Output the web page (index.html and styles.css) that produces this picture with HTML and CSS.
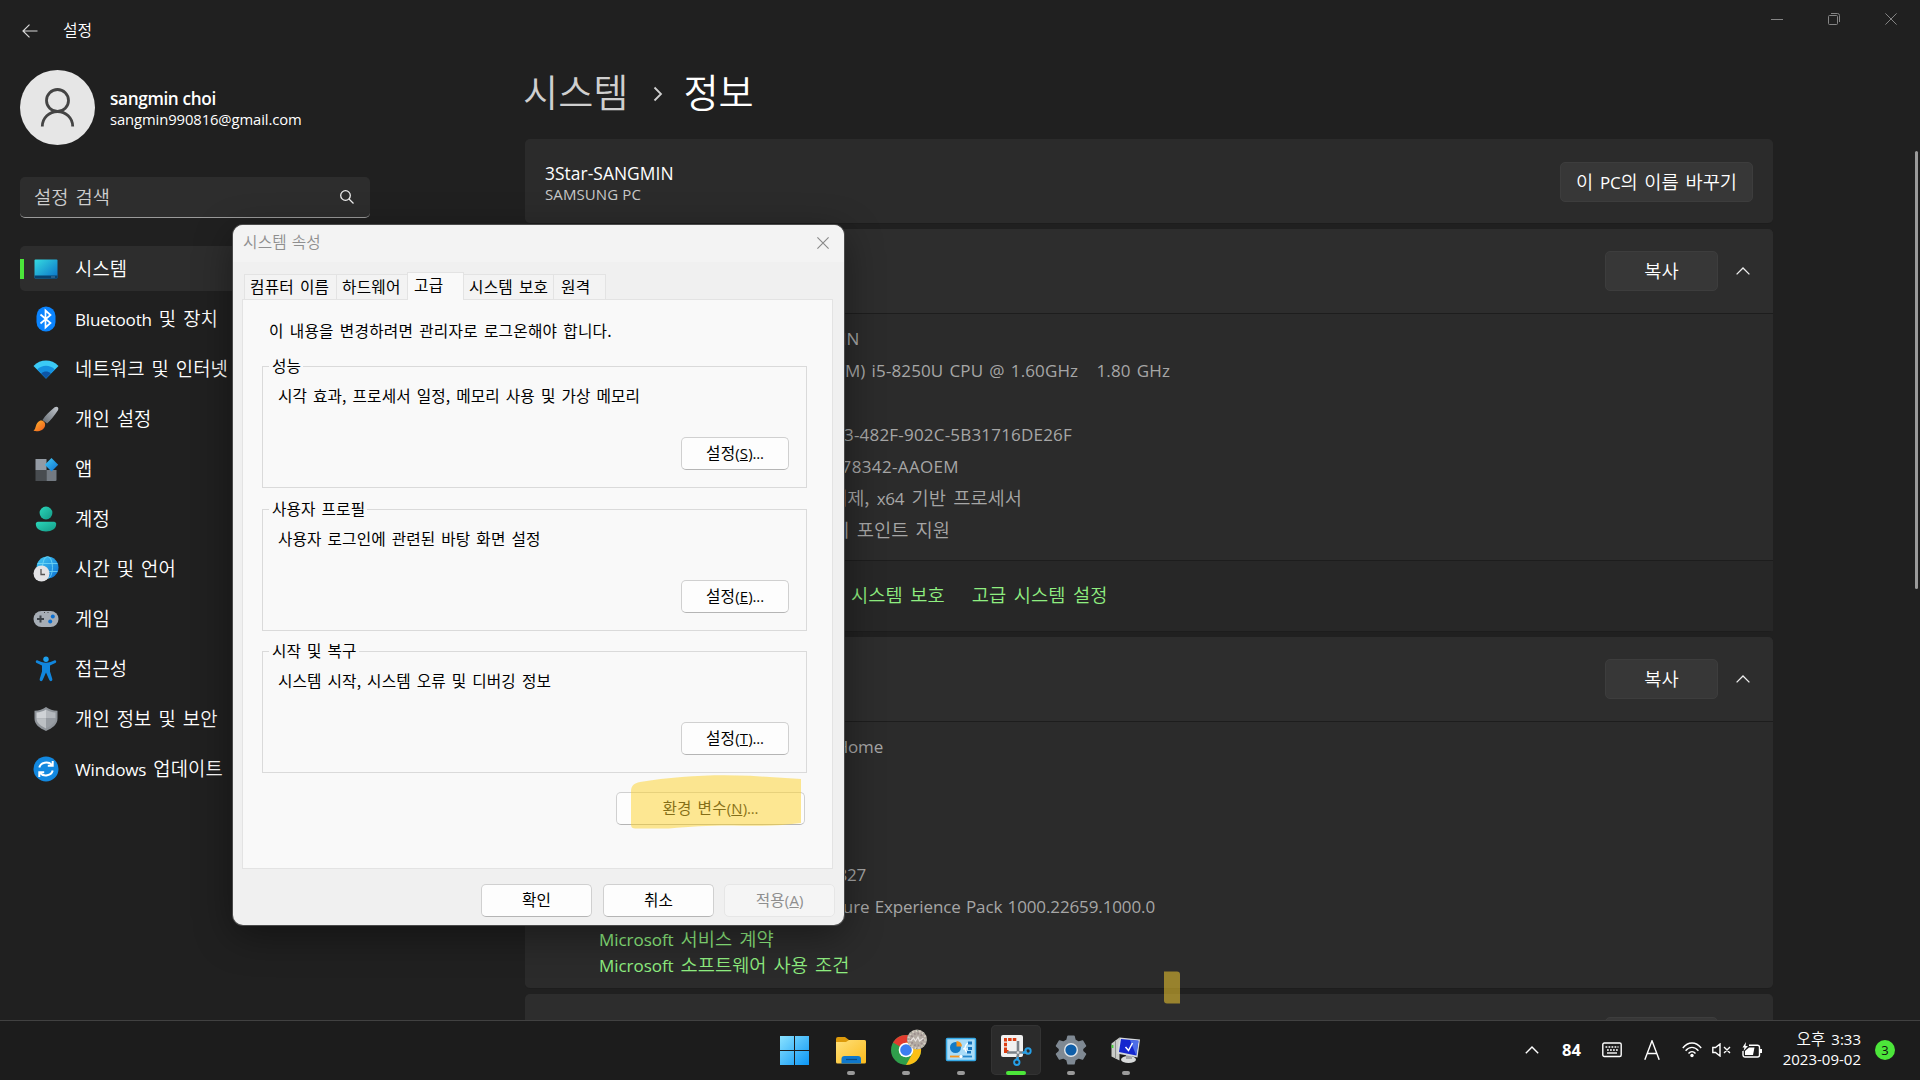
FILE: index.html
```html
<!DOCTYPE html>
<html lang="ko">
<head>
<meta charset="utf-8">
<title>설정</title>
<link rel="stylesheet" href="styles.css">
</head>
<body>
<div class="desktop">
  <div class="settings">
    <aside class="sidebar">
      <div class="app-bar">
        <svg class="back" viewBox="0 0 16 14"><path d="M15.500 7H1M7.500 .6L1 7l6.500 6.400"/></svg>
        <span class="app-title">설정</span>
      </div>
      <div class="account">
        <svg class="avatar" viewBox="0 0 75 75"><circle cx="37.500" cy="37.500" r="37.500" fill="#e6e6e6"/><g fill="none" stroke="#444" stroke-width="2.800"><circle cx="37.500" cy="30.500" r="11"/><path d="M22.300 56.500c0-8.500 7-15 15.200-15s15.200 6.500 15.200 15"/></g></svg>
        <div class="account-text">
          <div class="account-name">sangmin choi</div>
          <div class="account-mail">sangmin990816@gmail.com</div>
        </div>
      </div>
      <div class="search">
        <span>설정 검색</span>
        <svg viewBox="0 0 14 14"><circle cx="5.500" cy="5.500" r="4.800"/><path d="M9 9l4.500 4.500"/></svg>
      </div>
      <nav class="nav">
        <div class="nav-item selected">
          <svg viewBox="0 0 26 26"><defs><linearGradient id="g-sys" x1="0" y1="0" x2="1" y2="1"><stop offset="0" stop-color="#35dbe0"/><stop offset="1" stop-color="#0a70c8"/></linearGradient></defs><rect x="1.500" y="3.500" width="23" height="19" rx="1" fill="url(#g-sys)"/><path d="M1.500 19.500h23v2a1 1 0 0 1-1 1h-21a1 1 0 0 1-1-1z" fill="#07426f"/><path d="M18.500 21h1M20.500 21h1" stroke="#8bd" stroke-width="1"/></svg>
          <span>시스템</span>
        </div>
        <div class="nav-item">
          <svg viewBox="0 0 26 26"><rect x="3.500" y=".5" width="19" height="25" rx="9.500" fill="#0a84ff"/><path d="M7.500 8.500l10 8.500-5 4.500v-17l5 4.500-10 8.500" fill="none" stroke="#fff" stroke-width="1.700"/></svg>
          <span><b class="en">Bluetooth</b> 및 장치</span>
        </div>
        <div class="nav-item">
          <svg viewBox="0 0 26 26"><path d="M.5 10C7.500 2.700 18.500 2.700 25.500 10L13 22.500z" fill="#3bcaf6"/><path d="M4.200 13.500c5-5 12.600-5 17.600 0L13 22.500z" fill="#1590e0"/><path d="M8.200 17.500c2.800-2.600 6.800-2.600 9.600 0L13 22.500z" fill="#0d55a5"/></svg>
          <span>네트워크 및 인터넷</span>
        </div>
        <div class="nav-item">
          <svg viewBox="0 0 26 26"><defs><linearGradient id="g-br" x1="1" y1="0" x2="0" y2="1"><stop offset="0" stop-color="#c3c8ce"/><stop offset="1" stop-color="#646b72"/></linearGradient><linearGradient id="g-tip" x1="0" y1="0" x2="1" y2="1"><stop offset="0" stop-color="#ffb62e"/><stop offset="1" stop-color="#ee5a1c"/></linearGradient></defs><path d="M24.800 1.200c.8.800.6 2.200 0 3.200C21 10 17.500 14.500 14 17.500L9.500 14C12.500 9.500 17 5 21.600 1.300c1-.8 2.400-.8 3.200-.1z" fill="url(#g-br)"/><path d="M6.500 15c3-1.500 6.500 1.500 5.500 5-1.200 4.600-7 6-11.500 4.800C3.500 22.500 2 17.500 6.500 15z" fill="url(#g-tip)"/></svg>
          <span>개인 설정</span>
        </div>
        <div class="nav-item">
          <svg viewBox="0 0 26 26"><defs><linearGradient id="g-app" x1="0" y1="0" x2="1" y2="1"><stop offset="0" stop-color="#43cbf5"/><stop offset="1" stop-color="#0c70d2"/></linearGradient></defs><path d="M2.500 3h11v11h-11z" fill="#949ba4"/><path d="M2.500 14h11v11h-11z" fill="#484c50"/><path d="M13.500 14h10v10a1 1 0 0 1-1 1h-9z" fill="#737a82"/><path d="M18.500 2l6.700 6.700-6.700 6.700-6.700-6.700z" fill="url(#g-app)"/></svg>
          <span>앱</span>
        </div>
        <div class="nav-item">
          <svg viewBox="0 0 26 26"><defs><linearGradient id="g-acc" x1="0" y1="0" x2="1" y2="1"><stop offset="0" stop-color="#2bd6ba"/><stop offset="1" stop-color="#139a86"/></linearGradient></defs><circle cx="13" cy="7" r="6.400" fill="url(#g-acc)"/><path d="M5 15.800h16c1.300 0 2.200 1 2.200 2.200 0 4.700-4.500 7.500-10.200 7.500S2.800 22.700 2.800 18c0-1.200.9-2.200 2.200-2.200z" fill="url(#g-acc)"/></svg>
          <span>계정</span>
        </div>
        <div class="nav-item">
          <svg viewBox="0 0 26 26"><circle cx="14.500" cy="11.500" r="11" fill="url(#g-app)"/><g fill="none" stroke="#7fe0f8" stroke-width=".9" opacity=".8"><ellipse cx="14.500" cy="11.500" rx="5" ry="11"/><path d="M4.500 7.500h20M4.500 15.500h20"/></g><circle cx="8.500" cy="17.500" r="8" fill="#e3e3e5"/><path d="M8 13v5.500h4" fill="none" stroke="#555" stroke-width="1.300"/></svg>
          <span>시간 및 언어</span>
        </div>
        <div class="nav-item">
          <svg viewBox="0 0 26 26"><rect x=".5" y="5" width="25" height="16" rx="8" fill="#a6adb5"/><path d="M7.500 9.500v7M4 13h7" stroke="#3c4248" stroke-width="2"/><circle cx="19.800" cy="10.600" r="2" fill="#0b6fd0"/><circle cx="17.200" cy="15.400" r="2" fill="#0b6fd0"/><path d="M11 6.500h1M14.500 6.500h1" stroke="#444"/></svg>
          <span>게임</span>
        </div>
        <div class="nav-item">
          <svg viewBox="0 0 26 26"><circle cx="13" cy="3.200" r="2.700" fill="#1ea0ee"/><path d="M4.800 4.500c2.500 1.200 5 2.200 8.200 2.200s5.700-1 8.200-2.200c1.900-.7 2.800 1.700 1.100 2.600L17 9.500v6l2.300 7.600c.5 2-2.200 3-3 1L13 16.500l-3.300 7.600c-.8 2-3.500 1-3-1L9 15.500v-6L3.700 7.100C2 6.200 2.900 3.800 4.800 4.500z" fill="#1186dd"/></svg>
          <span>접근성</span>
        </div>
        <div class="nav-item">
          <svg viewBox="0 0 26 26"><path d="M13 1c3 2.500 7 3.500 11.500 3.800v7.700c0 6-5 9.500-11.500 12.500C6.500 22 1.500 18.500 1.500 12.500V4.800C6 4.500 10 3.500 13 1z" fill="#8f949a"/><path d="M13 3.500v8.800H3.500V6.500C7 6.200 10.500 5.300 13 3.500z" fill="#cfd2d6"/><path d="M13 3.500v8.800h9.500V6.500C19 6.200 15.500 5.300 13 3.500z" fill="#b4b8bd"/><path d="M3.500 12.300H13v10.200c-5-2.300-9.500-5.200-9.500-10.200z" fill="#bcc0c4"/><path d="M22.500 12.300H13v10.200c5-2.300 9.500-5.200 9.500-10.200z" fill="#989da3"/></svg>
          <span>개인 정보 및 보안</span>
        </div>
        <div class="nav-item">
          <svg viewBox="0 0 26 26"><circle cx="13" cy="13" r="12.500" fill="#1288e0"/><g fill="none" stroke="#fff" stroke-width="2"><path d="M6.300 11.500c1.300-5.300 9-6.500 12.700-2.500M19.700 14.500c-1.300 5.300-9 6.500-12.700 2.500"/><path d="M19.700 5v4.800h-4.900M6.300 21v-4.800h4.900"/></g></svg>
          <span><b class="en">Windows</b> 업데이트</span>
        </div>
      </nav>
    </aside>
    <main class="page">
      <h1 class="crumbs"><span class="crumb-parent">시스템</span><svg viewBox="0 0 10 16"><path d="M1.500 1.500L8 8l-6.500 6.500"/></svg><span>정보</span></h1>
      <section class="card device">
        <div>
          <div class="device-name">3Star-SANGMIN</div>
          <div class="device-model">SAMSUNG PC</div>
        </div>
        <div class="btn rename"><span>이 <b class="en">PC</b>의 이름 바꾸기</span></div>
      </section>
      <section class="card">
        <div class="card-head"><div class="btn copy">복사</div><svg class="chev" viewBox="0 0 14 8"><path d="M.6 7.400L7 1l6.400 6.400"/></svg></div>
        <div class="card-rows device-rows">
          <div class="row end-name"><b class="en">3Star-SANGMIN</b></div>
          <div class="row end-cpu"><b class="en">(TM) i5-8250U CPU @ 1.60GHz   1.80 GHz</b></div>
          <div class="row"></div>
          <div class="row end-id"><b class="en">33-482F-902C-5B31716DE26F</b></div>
          <div class="row end-product"><b class="en">78342-AAOEM</b></div>
          <div class="row ko end-type"><span>운영 체제, <b class="en">x64</b> 기반 프로세서</span></div>
          <div class="row ko end-pen"><span>터치 포인트 지원</span></div>
        </div>
        <div class="card-links"><span>시스템 보호</span><span>고급 시스템 설정</span></div>
      </section>
      <section class="card">
        <div class="card-head"><div class="btn copy">복사</div><svg class="chev" viewBox="0 0 14 8"><path d="M.6 7.400L7 1l6.400 6.400"/></svg></div>
        <div class="card-rows windows-rows">
          <div class="row end-edition"><b class="en">Windows 11 Home</b></div>
          <div class="row"></div>
          <div class="row"></div>
          <div class="row"></div>
          <div class="row end-build"><b class="en">827</b></div>
          <div class="row end-pack"><b class="en">Feature Experience Pack 1000.22659.1000.0</b></div>
          <div class="terms"><b class="en">Microsoft</b> 서비스 계약</div>
          <div class="terms"><b class="en">Microsoft</b> 소프트웨어 사용 조건</div>
        </div>
      </section>
      <section class="card next"><div class="btn copy"></div></section>
    </main>
    <div class="window-controls">
      <svg viewBox="0 0 12 12"><path d="M0 6.500h12"/></svg>
      <svg viewBox="0 0 12 12"><rect x=".5" y="2.500" width="9" height="9" rx="1"/><path d="M3 .5h6.500a2 2 0 0 1 2 2V9"/></svg>
      <svg viewBox="0 0 12 12"><path d="M.4.4l11.200 11.200M11.600.4L.4 11.600"/></svg>
    </div>
    <div class="scrollbar"></div>
  </div>

  <footer class="taskbar">
    <div class="apps">
      <div class="app"><svg viewBox="1.500 0 50 50"><defs><linearGradient id="g-win" x1="10" y1="11" x2="40" y2="40" gradientUnits="userSpaceOnUse"><stop offset="0" stop-color="#8be3ff"/><stop offset="1" stop-color="#0a95f5"/></linearGradient></defs><path d="M10.500 11h14v14h-14zM25.500 11h14v14h-14zM10.500 26h14v14h-14zM25.500 26h14v14h-14z" fill="url(#g-win)"/></svg></div>
      <div class="app running"><svg viewBox="0 0 50 50"><defs><linearGradient id="g-fold" x1="0" y1="0" x2="1" y2="1"><stop offset="0" stop-color="#ffe07a"/><stop offset="1" stop-color="#fbbb1c"/></linearGradient></defs><path d="M10 14a2 2 0 0 1 2-2h7l4 3h15a2 2 0 0 1 2 2v5H10z" fill="#dd9a0b"/><path d="M10 17h10l3-2h15a2 2 0 0 1 2 2v20a1.500 1.500 0 0 1-1.500 1.500h-27A1.500 1.500 0 0 1 10 37z" fill="url(#g-fold)"/><path d="M15.500 38.500V34a3 3 0 0 1 3-3H32a3 3 0 0 1 3 3v4.500z" fill="#0f78cc"/><path d="M20 34.500h11" stroke="#0a4d85" stroke-width="1.200"/></svg></div>
      <div class="app running"><svg viewBox="0 0 50 50"><circle cx="25" cy="25" r="15" fill="#2f9e4b"/><path d="M25 25L12 17.500A15 15 0 0 1 38 17.500z" fill="#e23b2e"/><path d="M25 17.500h13A15 15 0 0 1 25 40l6.500-11.500z" fill="#fbbf16"/><circle cx="25" cy="25" r="7.300" fill="#fff"/><circle cx="25" cy="25" r="5.800" fill="#3c7ef0"/><circle cx="36" cy="14.500" r="10" fill="#b4aca4"/><g fill="none" stroke-dasharray="1.500 2"><circle cx="36" cy="14.500" r="8.500" stroke="#d7cfc4" stroke-width="2"/><circle cx="36" cy="14.500" r="6" stroke="#9a8c8c" stroke-width="2"/><circle cx="36" cy="14.500" r="9" stroke="#74907f" stroke-dasharray="1 6"/></g><path d="M29.500 16l3-3 2 3 2.500-4 1.500 4 4-3" fill="none" stroke="#e8e3e0" stroke-width="1.200"/></svg></div>
      <div class="app running"><svg viewBox="0 0 50 50"><rect x="10.500" y="13.500" width="29" height="22" rx="1" fill="#a9dcf8" stroke="#35a9e6" stroke-width="1.500"/><circle cx="19.500" cy="22.500" r="5.500" fill="#137ac6"/><path d="M20.500 21.500V16a5.500 5.500 0 0 1 5.500 5.500z" fill="#f7941d"/><path d="M27 24c4 0 1-6 6-6M28 24h5M29 24c1 4 2 3 4 3" fill="none" stroke="#fff" stroke-width="1.200"/><path d="M32 16.500h4v3h-4zM32 22h4v3h-4zM31 26h4v2.500h-4z" fill="#1673bd"/><path d="M14 31.500h10" stroke="#f7941d" stroke-width="1.800"/><path d="M26 31.500h10" stroke="#2587cc" stroke-width="1.800"/><circle cx="25" cy="31.500" r="1.600" fill="#fff"/></svg></div>
      <div class="app active"><svg viewBox="0 0 50 50"><rect x="10" y="10" width="22" height="22" rx="2" fill="#f1f1f1"/><path d="M14.500 26v-11.500H26" fill="none" stroke="#dc3c10" stroke-width="3" stroke-dasharray="3.500 1.200"/><path d="M14.500 24v2.500h3" fill="none" stroke="#dc3c10" stroke-width="3"/><path d="M27 16v14l-1.500 5M16 27.500h18l2-1" fill="none" stroke="#7b8289" stroke-width="2.600"/><circle cx="27" cy="27.500" r="1.300" fill="#ddd"/><circle cx="37" cy="26" r="2.700" fill="none" stroke="#25a0e8" stroke-width="1.900"/><circle cx="25.800" cy="37.300" r="2.700" fill="none" stroke="#25a0e8" stroke-width="1.900"/><path d="M31.500 28l3-1M27 32l-.6 3" stroke="#25a0e8" stroke-width="2"/></svg></div>
      <div class="app running"><svg viewBox="0 0 50 50"><path d="M22 11.200h6l1 4 3.500 1.900 4-1.200 3 5-3 2.900v2.400l3 2.900-3 5-4-1.200-3.500 1.900-1 4h-6l-1-4-3.500-1.900-4 1.200-3-5 3-2.900v-2.400l-3-2.900 3-5 4 1.200 3.500-1.900z" fill="#7f8993" stroke="#7f8993" stroke-width="1.500" stroke-linejoin="round"/><circle cx="25" cy="25" r="7" fill="#e2e7eb"/><circle cx="25" cy="25" r="5.600" fill="#0f5ea8"/></svg></div>
      <div class="app running"><svg viewBox="0 0 50 50"><path d="M10.500 18.500l8-6v23l-8-4z" fill="#c9cbc8"/><path d="M14.500 15.500v18" stroke="#8d908e"/><path d="M11.500 20v3" stroke="#49d23b" stroke-width="1.800"/><ellipse cx="27.500" cy="34.500" rx="7.500" ry="3.600" fill="#d8dada"/><path d="M25 29h6v5h-6z" fill="#a4a6a8"/><path d="M18.500 12.500l20.500 2-2.500 18L16 28.500z" fill="#d5d9de"/><path d="M20 14l17.500 1.800-2.200 14.700L18 27z" fill="#1527cf"/><path d="M29 15l8.500.8-2.200 14.700z" fill="#4d6de8"/><path d="M24.500 22l3 3.500 4-7.500" fill="none" stroke="#fff" stroke-width="1.500"/></svg></div>
    </div>
    <div class="tray">
      <svg class="t-chev" viewBox="0 0 14 8"><path d="M.8 7.200L7 1l6.200 6.200"/></svg>
      <span class="t-temp">84</span>
      <svg class="t-kbd" viewBox="0 0 20 16"><rect x=".8" y="1" width="18.400" height="13.500" rx="1.500"/><path d="M3.500 5h13M5 8h11" stroke-dasharray="1.800 1.200"/><path d="M5 11h10"/></svg>
      <svg class="t-ime" viewBox="0 0 16 20"><path d="M.8 19.800L8 .8l7.200 19M3.500 13.500h9"/></svg>
      <svg class="t-wifi" viewBox="0 0 20 16"><path d="M.8 6C6-.6 14-.6 19.200 6M3.600 8.800c3.700-4.600 9.100-4.600 12.800 0M6.500 11.500c2-2.500 5-2.500 7 0"/><circle cx="10" cy="13.500" r="1.700" fill="#fff" stroke="none"/></svg>
      <svg class="t-snd" viewBox="0 0 19 14"><path d="M.8 4.500h2.700L8 1v12L3.500 9.500H.8zM12 4l6 6M18 4l-6 6"/></svg>
      <svg class="t-bat" viewBox="0 0 20 16"><path d="M7 3.200h8.500a2 2 0 0 1 2 2V13a2 2 0 0 1-2 2H3a2 2 0 0 1-2-2V9"/><path d="M7 5.500h5.500L11 13H3V9z" fill="#fff" stroke="none"/><path d="M19 7v4" stroke-width="2"/><path d="M4 0L.5 5.500h2L1.500 9 6 4H3.500z" fill="#fff" stroke="none"/></svg>
      <div class="clock"><div>오후 <b class="en">3:33</b></div><div><b class="en">2023-09-02</b></div></div>
      <span class="badge">3</span>
    </div>
  </footer>

  <div class="dialog">
    <div class="dialog-title"><span>시스템 속성</span><svg viewBox="0 0 12 12"><path d="M.4.400l11.200 11.200M11.600.4L.4 11.600"/></svg></div>
    <div class="tabs">
      <div class="tab tab-name">컴퓨터 이름</div><div class="tab tab-hw">하드웨어</div><div class="tab tab-adv">고급</div><div class="tab tab-protect">시스템 보호</div><div class="tab tab-remote">원격</div>
    </div>
    <div class="panel">
      <p class="notice">이 내용을 변경하려면 관리자로 로그온해야 합니다.</p>
      <div class="group">
        <div class="legend">성능</div>
        <p>시각 효과, 프로세서 일정, 메모리 사용 및 가상 메모리</p>
        <div class="dbtn small"><span>설정<b class="en">(<u>S</u>)...</b></span></div>
      </div>
      <div class="group">
        <div class="legend">사용자 프로필</div>
        <p>사용자 로그인에 관련된 바탕 화면 설정</p>
        <div class="dbtn small"><span>설정<b class="en">(<u>E</u>)...</b></span></div>
      </div>
      <div class="group">
        <div class="legend">시작 및 복구</div>
        <p>시스템 시작, 시스템 오류 및 디버깅 정보</p>
        <div class="dbtn small"><span>설정<b class="en">(<u>T</u>)...</b></span></div>
      </div>
      <div class="dbtn env"><span>환경 변수<b class="en">(<u>N</u>)...</b></span></div>
    </div>
    <div class="dialog-actions">
      <div class="dbtn">확인</div><div class="dbtn">취소</div><div class="dbtn disabled"><span>적용<b class="en">(<u>A</u>)</b></span></div>
    </div>
  </div>

  <svg class="marker marker-env" viewBox="0 0 172 54"><path d="M1 16c0-5 3-8 9-9C45 1 85-1 120 .8L171 4v44c-20 3-45 3-70 2.500-25 0-40 1-62 3H5c-4 0-4-3-4-5z"/></svg>
  <svg class="marker marker-dot" viewBox="0 0 18 33"><path d="M1 .5h13q3 0 3 3v29H4q-3 0-3-3z"/></svg>
</div>
</body>
</html>
```
FILE: styles.css
```css
* { box-sizing: border-box; }
body { margin: 0; background: #202020; color: #fff; font-family: "Noto Sans CJK KR", sans-serif; font-weight: 350; overflow: hidden; }
p, h1 { margin: 0; font-weight: inherit; }
svg { display: block; flex: none; }
.en { font-family: "Open Sans", "Noto Sans", sans-serif; font-weight: 400; font-size: .91em; line-height: 0; letter-spacing: -.2px; word-spacing: 1px; }
.desktop { position: relative; width: 1920px; height: 1080px; display: flex; flex-direction: column; overflow: hidden; white-space: nowrap; }

.settings { height: 1020px; display: flex; overflow: hidden; background: #202020; }
.sidebar { width: 525px; flex: none; padding: 0 155px 0 20px; }
.app-bar { height: 60px; display: flex; align-items: center; padding-left: 2px; }
.back { width: 16px; height: 14px; margin: 1px 25px 0 0; fill: none; stroke: #d8d8d8; stroke-width: 1.2; }
.app-title { padding-bottom: 2px; font-size: 15.9px; }
.account { margin-top: 10px; height: 75px; display: flex; align-items: center; }
.avatar { width: 75px; height: 75px; margin-right: 15px; }
.account-text { padding-top: 1px; font-family: "Open Sans", sans-serif; }
.account-name { font-size: 17.2px; font-weight: 600; line-height: 22px; letter-spacing: -.35px; }
.account-mail { font-size: 14.8px; font-weight: 400; line-height: 19px; letter-spacing: -.1px; }
.search { margin-top: 32px; height: 41px; display: flex; align-items: center; justify-content: space-between; padding: 0 16px 3px 14px; border-radius: 5px; background: #2d2d2d; border-bottom: 1px solid #9a9a9a; color: #cecece; font-size: 18.7px; word-spacing: 2px; }
.search span { padding-bottom: 1px; }
.search svg { width: 14px; height: 14px; margin-top: 3px; fill: none; stroke: #eee; stroke-width: 1.3; }
.nav { margin-top: 28px; display: flex; flex-direction: column; gap: 5px; }
.nav-item { height: 45px; display: flex; align-items: center; padding-left: 12.5px; border-radius: 5px; font-size: 18.8px; letter-spacing: .1px; word-spacing: 1.6px; }
.nav-item svg { width: 26px; height: 26px; margin-right: 16.5px; }
.nav-item span { padding-bottom: 3px; }
.nav-item.selected { background: linear-gradient(#4ce63a, #4ce63a) 0 50% / 4px 20px no-repeat #2d2d2d; }

.page { width: 1248px; flex: none; }
.crumbs { height: 139px; display: flex; align-items: center; padding-top: 43px; font-size: 38.2px; line-height: 1; }
.crumb-parent { color: #cfcfcf; margin-left: -2px; }
.crumbs svg { width: 10px; height: 18px; margin: 5px 20px 0 25px; fill: none; stroke: #cfcfcf; stroke-width: 1.8; }
.card { margin-bottom: 5px; border-radius: 5px; background: #2b2b2b; border: 1px solid #1d1d1d; border-width: 0 0 1px; }
.device { height: 85px; display: flex; align-items: center; justify-content: space-between; padding: 1px 20px 0; font-family: "Open Sans", sans-serif; font-weight: 400; }
.device-name { padding-top: 2px; font-size: 17.4px; line-height: 22px; letter-spacing: .05px; }
.device-model { font-size: 15px; line-height: 20px; color: #c8c8c8; letter-spacing: .1px; }
.btn { display: flex; align-items: center; justify-content: center; height: 40px; padding-bottom: 3px; border-radius: 5px; background: #373737; border: 1px solid #3d3d3d; font: 350 18.7px "Noto Sans CJK KR", sans-serif; word-spacing: 1.5px; }
.rename { width: 193px; }
.copy { width: 113px; }
.card-head { height: 85px; display: flex; align-items: center; justify-content: flex-end; padding-right: 23px; gap: 18px; background: #2d2d2d; border-bottom: 1px solid #1d1d1d; border-radius: 5px 5px 0 0; }
.chev { width: 14px; height: 8px; fill: none; stroke: #eee; stroke-width: 1.3; }
.card-rows { padding-left: 74px; }
.device-rows { height: 246px; padding-top: 9px; }
.row { height: 32px; display: flex; align-items: center; justify-content: flex-end; color: #a6a6a6; font-size: 18.7px; word-spacing: 2px; white-space: pre; }
.row.ko { padding-bottom: 5px; }
.end-name { width: 260px; }
.end-cpu { width: 571px; }
.end-cpu .en { letter-spacing: .12px; word-spacing: 1.6px; }
.end-id { width: 473px; }
.end-id .en { letter-spacing: .2px; }
.end-product { width: 360px; }
.end-product .en { letter-spacing: .35px; }
.end-type { width: 423px; }
.end-pen { width: 351px; }
.end-edition { width: 284px; }
.end-build { width: 267px; }
.end-pack { width: 556px; }
.end-pack .en { letter-spacing: -.12px; }
.card-links { height: 71px; display: flex; align-items: center; gap: 27px; padding: 0 0 6px 326px; background: #272727; border-top: 1px solid #1d1d1d; color: #8fee80; font-size: 18.7px; letter-spacing: .1px; word-spacing: 2px; }
.windows-rows { height: 266px; padding-top: 9px; }
.terms { position: relative; top: 2px; color: #8fee80; font-size: 18.7px; line-height: 26px; word-spacing: 1.8px; }
.terms .en { letter-spacing: -.05px; }
.next { height: 60px; padding: 23px 55px 0 0; background: #2d2d2d; }
.next .copy { margin-left: auto; }
.window-controls { width: 132px; flex: none; display: flex; gap: 45px; padding-top: 13px; margin-left: -2px; }
.window-controls svg { width: 12px; height: 12px; fill: none; stroke: #858585; stroke-width: 1; }
.scrollbar { width: 3px; height: 438px; margin: 151px 0 0 12px; border-radius: 2px; background: #9a9a9a; }

.taskbar { height: 60px; display: flex; background: #1c1c1c; border-top: 1px solid #414141; }
.apps { display: flex; gap: 5px; padding: 4px 0 0 771px; width: 1525px; flex: none; }
.app { width: 50px; height: 50px; display: flex; flex-direction: column; justify-content: flex-end; align-items: center; border-radius: 5px; }
.app svg { width: 50px; height: 50px; flex: none; }
.app::after { content: ""; width: 8px; height: 4px; margin: -4px 0 0; border-radius: 2px; }
.running::after { background: #9a9a9a; }
.active { background: #2b2b2b; box-shadow: inset 0 0 0 1px #333; }
.active::after { width: 20px; background: #4ce63a; }
.tray { display: flex; align-items: center; flex: 1; padding-bottom: 1px; }
.tray svg { fill: none; stroke: #fff; stroke-width: 1.4; }
.t-chev { width: 14px; height: 8px; }
.t-temp { width: 20px; margin: 0 20px 0 23px; padding-bottom: 1px; font: 700 16.5px "Open Sans", sans-serif; }
.t-kbd { width: 20px; height: 16px; margin-right: 22px; }
.t-ime { width: 16px; height: 20px; margin-right: 22px; }
.t-wifi { width: 20px; height: 16px; margin-right: 10px; }
.t-snd { width: 19px; height: 14px; margin-right: 11px; }
.t-bat { width: 20px; height: 16px; }
.clock { width: 99px; padding-bottom: 2px; text-align: right; font-size: 15.7px; line-height: 20px; word-spacing: 1.5px; }
.clock .en { font-size: 15px; letter-spacing: 0; }
.badge { width: 20px; height: 20px; margin-left: 14px; border-radius: 50%; background: #4ce63a; color: #111; font: 400 13px/20px "Open Sans", sans-serif; text-align: center; }

.dialog { position: absolute; left: 233px; top: 225px; width: 611px; height: 700px; border-radius: 10px; background: #f0f0f0; color: #000; font-size: 15.7px; font-weight: 400; overflow: hidden; box-shadow: 0 0 0 1px #4a4a4a, 0 10px 38px rgba(0, 0, 0, .42); letter-spacing: .1px; word-spacing: 1.5px; }
.dialog .en { font-size: .95em; letter-spacing: -.1px; }
.dialog u { margin: 0 .3px; }
.dialog-title { height: 37px; display: flex; align-items: center; justify-content: space-between; padding: 0 15px 3px 10px; background: #f3f3f3; color: #8f8f8f; font-weight: 350; letter-spacing: .25px; word-spacing: 0; }
.dialog-title span { padding-bottom: 1px; }
.dialog-title svg { width: 12px; height: 12px; margin-top: 1px; fill: none; stroke: #888; stroke-width: 1.1; }
.tabs { height: 37px; display: flex; align-items: flex-end; padding-left: 11px; }
.tab { height: 25px; line-height: 24px; border: 1px solid #e3e3e3; border-width: 1px 0 0 1px; background: #f3f3f3; padding-left: 5px; letter-spacing: .2px; }
.tab-name { width: 92px; }
.tab-hw { width: 71px; }
.tab-adv { width: 57px; height: 28px; margin-bottom: -1px; padding-left: 6px; line-height: 24px; border-width: 1px 1px 0; background: #f9f9f9; z-index: 1; }
.tab-protect { width: 89px; border-left: 0; }
.tab-remote { width: 53px; padding-left: 7px; border-right-width: 1px; }
.panel { width: 591px; height: 570px; margin-left: 9px; padding: 19px 25px 0 19px; border: 1px solid #e3e3e3; background: #f9f9f9; }
.notice { height: 47px; line-height: 24px; padding-left: 7px; letter-spacing: .22px; }
.group { height: 122px; margin-bottom: 21px; border: 1px solid #dadada; display: flex; flex-direction: column; align-items: flex-start; }
.group:nth-of-type(2) { margin-bottom: 20px; }
.legend { height: 24px; margin: -13px 0 0 6px; padding: 0 2px 0 3px; line-height: 24px; background: #f9f9f9; }
.group p { padding: 6px 0 0 15px; line-height: 24px; }
.dbtn { width: 111px; height: 33px; display: flex; align-items: center; justify-content: center; padding-bottom: 2px; border: 1px solid #d0d0d0; border-bottom-color: #b5b5b5; border-radius: 5px; background: #fdfdfd; }
.small { width: 108px; margin: 29px 17px 0 auto; }
.env { width: 189px; margin: -2px 2px 0 auto; }
.dialog-actions { display: flex; gap: 11px; padding: 15px 0 0 248px; }
.disabled { margin-left: -1px; color: #8e8e8e; background: #f5f5f5; border-color: #e6e6e6; }

.marker { position: absolute; fill: #fdd22f; fill-opacity: .52; }
.marker-env { left: 630px; top: 775px; width: 172px; height: 54px; }
.marker-dot { left: 1163px; top: 971px; width: 18px; height: 33px; }
```
